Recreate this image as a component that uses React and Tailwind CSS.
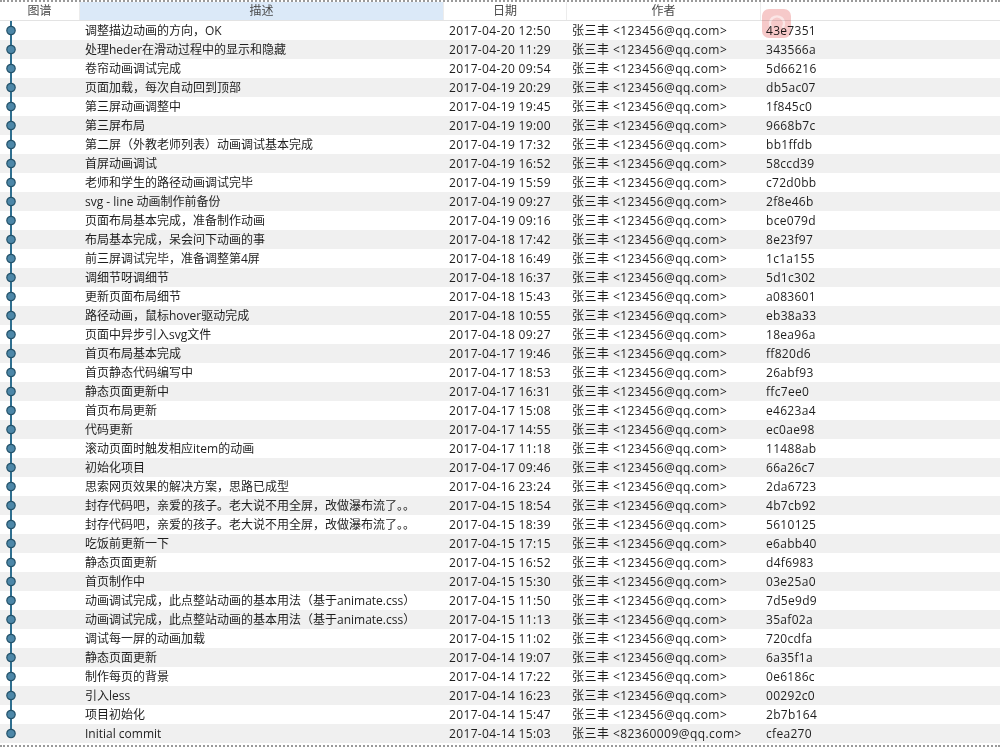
import React from "react";

const commits = [
  ["调整描边动画的方向，OK", "2017-04-20 12:50", "43e7351"],
  ["处理heder在滑动过程中的显示和隐藏", "2017-04-20 11:29", "343566a"],
  ["卷帘动画调试完成", "2017-04-20 09:54", "5d66216"],
  ["页面加载，每次自动回到顶部", "2017-04-19 20:29", "db5ac07"],
  ["第三屏动画调整中", "2017-04-19 19:45", "1f845c0"],
  ["第三屏布局", "2017-04-19 19:00", "9668b7c"],
  ["第二屏（外教老师列表）动画调试基本完成", "2017-04-19 17:32", "bb1ffdb"],
  ["首屏动画调试", "2017-04-19 16:52", "58ccd39"],
  ["老师和学生的路径动画调试完毕", "2017-04-19 15:59", "c72d0bb"],
  ["svg - line 动画制作前备份", "2017-04-19 09:27", "2f8e46b"],
  ["页面布局基本完成，准备制作动画", "2017-04-19 09:16", "bce079d"],
  ["布局基本完成，呆会问下动画的事", "2017-04-18 17:42", "8e23f97"],
  ["前三屏调试完毕，准备调整第4屏", "2017-04-18 16:49", "1c1a155"],
  ["调细节呀调细节", "2017-04-18 16:37", "5d1c302"],
  ["更新页面布局细节", "2017-04-18 15:43", "a083601"],
  ["路径动画，鼠标hover驱动完成", "2017-04-18 10:55", "eb38a33"],
  ["页面中异步引入svg文件", "2017-04-18 09:27", "18ea96a"],
  ["首页布局基本完成", "2017-04-17 19:46", "ff820d6"],
  ["首页静态代码编写中", "2017-04-17 18:53", "26abf93"],
  ["静态页面更新中", "2017-04-17 16:31", "ffc7ee0"],
  ["首页布局更新", "2017-04-17 15:08", "e4623a4"],
  ["代码更新", "2017-04-17 14:55", "ec0ae98"],
  ["滚动页面时触发相应item的动画", "2017-04-17 11:18", "11488ab"],
  ["初始化项目", "2017-04-17 09:46", "66a26c7"],
  ["思索网页效果的解决方案，思路已成型", "2017-04-16 23:24", "2da6723"],
  ["封存代码吧，亲爱的孩子。老大说不用全屏，改做瀑布流了。。", "2017-04-15 18:54", "4b7cb92"],
  ["封存代码吧，亲爱的孩子。老大说不用全屏，改做瀑布流了。。", "2017-04-15 18:39", "5610125"],
  ["吃饭前更新一下", "2017-04-15 17:15", "e6abb40"],
  ["静态页面更新", "2017-04-15 16:52", "d4f6983"],
  ["首页制作中", "2017-04-15 15:30", "03e25a0"],
  ["动画调试完成，此点整站动画的基本用法（基于animate.css）", "2017-04-15 11:50", "7d5e9d9"],
  ["动画调试完成，此点整站动画的基本用法（基于animate.css）", "2017-04-15 11:13", "35af02a"],
  ["调试每一屏的动画加载", "2017-04-15 11:02", "720cdfa"],
  ["静态页面更新", "2017-04-14 19:07", "6a35f1a"],
  ["制作每页的背景", "2017-04-14 17:22", "0e6186c"],
  ["引入less", "2017-04-14 16:23", "00292c0"],
  ["项目初始化", "2017-04-14 15:47", "2b7b164"],
  ["Initial commit", "2017-04-14 15:03", "cfea270", "张三丰 <82360009@qq.com>"],
];

function GraphCell({ last }) {
  return (
    <svg width="80" height="19" className="block">
      <line x1="11" y1="0" x2="11" y2={last ? 9.5 : 19} stroke="#2f6f8f" strokeWidth="2" />
      <circle cx="11" cy="9.5" r="4.2" fill="#4d87a8" stroke="#24536b" strokeWidth="1.2" />
    </svg>
  );
}

export default function App() {
  return (
    <div
      className="relative w-[1000px] h-[749px] bg-white text-[12px] text-[#1e1e1e] overflow-hidden"
      style={{ fontFamily: '"Open Sans", "Noto Sans CJK SC", sans-serif' }}
    >
      <div className="border-t-2 border-dotted border-[#9a9a9a]" />
      <div className="grid grid-cols-[80px_364px_123px_194px_1fr] h-[19px] border-b border-[#e3e3e3] text-[#4a4a4a] leading-[18px]">
        <div className="text-center border-r border-[#ececec]">图谱</div>
        <div className="text-center bg-[#dbe9f8] border-r border-[#ececec]">描述</div>
        <div className="text-center border-r border-[#ececec]">日期</div>
        <div className="text-center border-r border-[#ececec]">作者</div>
        <div />
      </div>
      <div className="flex flex-col">
        {commits.map((c, i) => (
          <div
            key={i}
            className={`grid grid-cols-[80px_364px_123px_194px_1fr] h-[19px] leading-[19px] ${i % 2 ? "bg-[#f0f0f0]" : "bg-white"}`}
          >
            <GraphCell last={i === commits.length - 1} />
            <div className="pl-[5px] whitespace-nowrap">{c[0]}</div>
            <div className="pl-[5px] whitespace-nowrap tracking-[0.35px]">{c[1]}</div>
            <div className="pl-[5px] whitespace-nowrap tracking-[0.45px]">{c[3] || "张三丰 <123456@qq.com>"}</div>
            <div className="pl-[5px] whitespace-nowrap tracking-[0.3px]">{c[2]}</div>
          </div>
        ))}
      </div>
      <div className="mt-[2px] border-t-2 border-dotted border-[#9a9a9a]" />
      <div className="absolute left-[762px] top-[9px] w-[29px] h-[29px] rounded-[7px] bg-[#f6c9c9] mix-blend-multiply flex items-center justify-center">
        <svg width="20" height="20" viewBox="0 0 20 20">
          <path d="M4 13 A7 7 0 1 1 16 13" fill="none" stroke="#fbe6e6" strokeWidth="2.5" strokeLinecap="round" />
        </svg>
      </div>
    </div>
  );
}
